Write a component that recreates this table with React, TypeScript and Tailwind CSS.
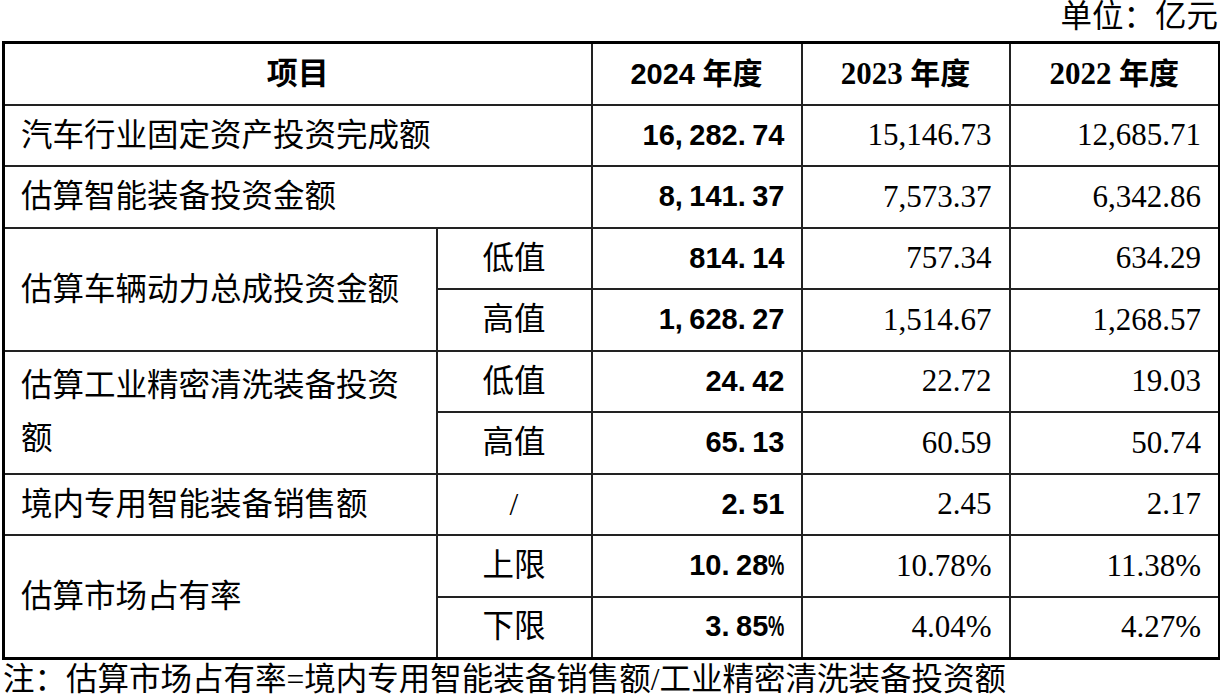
const rows = [
  { label: "汽车行业固定资产投资完成额", sub: null, span: 0, v: ["16,282.74", "15,146.73", "12,685.71"] },
  { label: "估算智能装备投资金额", sub: null, span: 0, v: ["8,141.37", "7,573.37", "6,342.86"] },
  { label: "估算车辆动力总成投资金额", sub: "低值", span: 2, v: ["814.14", "757.34", "634.29"] },
  { label: null, sub: "高值", span: 0, v: ["1,628.27", "1,514.67", "1,268.57"] },
  { label: "估算工业精密清洗装备投资额", sub: "低值", span: 2, v: ["24.42", "22.72", "19.03"] },
  { label: null, sub: "高值", span: 0, v: ["65.13", "60.59", "50.74"] },
  { label: "境内专用智能装备销售额", sub: "/", span: 0, v: ["2.51", "2.45", "2.17"] },
  { label: "估算市场占有率", sub: "上限", span: 2, v: ["10.28%", "10.78%", "11.38%"] },
  { label: null, sub: "下限", span: 0, v: ["3.85%", "4.04%", "4.27%"] },
]

// 2024 figures are set in a half-width bold face: punctuation takes a full digit cell
function BoldNum({ value }: { value: string }) {
  return (
    <span className="whitespace-nowrap">
      {value.split("").map((ch, i) => {
        if (ch === "," || ch === ".") {
          return <span key={i} className="inline-block w-[0.5em] text-left">{ch}</span>
        }
        if (ch === "%") {
          return (
            <span key={i} className="inline-block w-[0.56em] text-left">
              <span className="inline-block origin-left scale-x-[0.63]">%</span>
            </span>
          )
        }
        return <span key={i}>{ch}</span>
      })}
    </span>
  )
}

const cell = "border-2 border-[#222] align-middle"

export default function App() {
  return (
    <div className="w-[1220px] h-[698px] overflow-hidden bg-white text-black font-['Liberation_Serif','Noto_Sans_CJK_SC',serif]">
      <div className="h-[41px] flex justify-end pr-[2px] text-[31.5px] leading-[34px]">单位：亿元</div>
      <table className="ml-[2px] w-[1216px] table-fixed border-collapse border-[3px] border-black">
        <colgroup>
          <col className="w-[433px]" />
          <col className="w-[155px]" />
          <col className="w-[210px]" />
          <col className="w-[208px]" />
          <col className="w-[210px]" />
        </colgroup>
        <thead>
          <tr className="h-[62px]">
            <th colSpan={2} className={`${cell} text-[31px] font-bold text-center`}>项目</th>
            <th className={`${cell} text-[30px] font-bold text-center`}>
              <span className="font-['Liberation_Sans','Noto_Sans_CJK_SC',sans-serif] text-[29px]">2024</span> 年度
            </th>
            <th className={`${cell} text-[30px] font-bold text-center`}>
              <span className="text-[31px]">2023</span> 年度
            </th>
            <th className={`${cell} text-[30px] font-bold text-center`}>
              <span className="text-[31px]">2022</span> 年度
            </th>
          </tr>
        </thead>
        <tbody>
          {rows.map((r, i) => (
            <tr key={i} className="h-[61.5px]">
              {r.label && (
                <td
                  colSpan={r.sub ? 1 : 2}
                  rowSpan={r.span || 1}
                  className={`${cell} px-[16px] text-[31.5px] leading-[53px] text-left`}
                >
                  {r.label}
                </td>
              )}
              {r.sub && (
                <td className={`${cell} text-[31.5px] text-center`}>{r.sub}</td>
              )}
              <td className={`${cell} pr-[16px] text-right text-[29px] font-bold font-['Liberation_Sans',sans-serif]`}>
                <BoldNum value={r.v[0]} />
              </td>
              <td className={`${cell} pr-[17px] text-right text-[31px]`}>{r.v[1]}</td>
              <td className={`${cell} pr-[17px] text-right text-[31px]`}>{r.v[2]}</td>
            </tr>
          ))}
        </tbody>
      </table>
      <div className="pl-[3px] text-[31.5px] leading-[40px] whitespace-nowrap">
        注：估算市场占有率=境内专用智能装备销售额/工业精密清洗装备投资额
      </div>
    </div>
  )
}
